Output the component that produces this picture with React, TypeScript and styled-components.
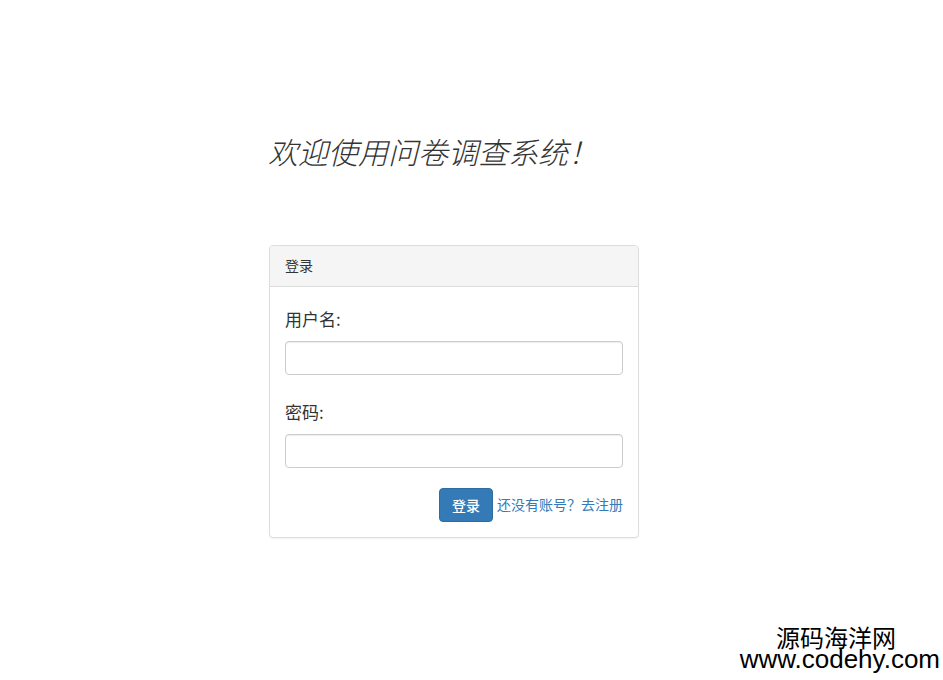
import styled, { createGlobalStyle } from "styled-components";

const GlobalStyle = createGlobalStyle`
  html, body {
    margin: 0;
    padding: 0;
    background: #fff;
  }
  body {
    font-family: "Liberation Sans", "Noto Sans CJK SC", sans-serif;
    font-size: 14px;
    line-height: 1.42857;
    color: #333;
  }
  * {
    box-sizing: border-box;
  }
`;

const Page = styled.div`
  width: 943px;
  height: 680px;
  position: relative;
  padding: 135px 0 0 268px;
`;

const Title = styled.h1`
  margin: 0 0 77px;
  font-size: 30px;
  line-height: 33px;
  font-weight: 300;
  font-style: italic;
  color: #333;
  font-family: "Noto Sans CJK SC", sans-serif;
`;

const Panel = styled.div`
  width: 370px;
  margin-left: 1px;
  border: 1px solid #ddd;
  border-radius: 4px;
  background: #fff;
  box-shadow: 0 1px 1px rgba(0, 0, 0, 0.05);
`;

const PanelHeading = styled.div`
  height: 41px;
  padding: 10px 15px;
  background: #f5f5f5;
  border-bottom: 1px solid #ddd;
  border-radius: 3px 3px 0 0;
  font-family: "Noto Sans CJK SC", sans-serif;
  font-size: 14px;
  line-height: 19px;
  color: #333;
`;

const PanelBody = styled.form`
  padding: 19px 15px 15px;
`;

const FormGroup = styled.div<{ $gap: number }>`
  margin-bottom: ${(p) => p.$gap}px;
`;

const Label = styled.label`
  display: block;
  margin-bottom: 9px;
  font-family: "Noto Sans CJK SC", sans-serif;
  font-size: 17px;
  line-height: 26px;
  font-weight: 400;
  color: #333;
`;

const Input = styled.input`
  display: block;
  width: 100%;
  height: 34px;
  padding: 6px 12px;
  border: 1px solid #ccc;
  border-radius: 4px;
  box-shadow: inset 0 1px 1px rgba(0, 0, 0, 0.075);
  font-size: 14px;
  outline: none;
`;

const Actions = styled.div`
  display: flex;
  justify-content: flex-end;
  align-items: center;
  gap: 4px;
`;

const Button = styled.button`
  width: 54px;
  height: 34px;
  padding: 0;
  border: 1px solid #2e6da4;
  border-radius: 4px;
  background: #337ab7;
  color: #fff;
  font-family: "Noto Sans CJK SC", sans-serif;
  font-size: 14px;
  font-weight: 500;
  cursor: pointer;
`;

const Link = styled.a`
  color: #337ab7;
  text-decoration: none;
  font-family: "Noto Sans CJK SC", sans-serif;
  font-size: 14px;
  margin-top: -2px;
`;

const Watermark = styled.div`
  position: absolute;
  right: 3px;
  bottom: 9px;
  text-align: right;
  color: #000;
  line-height: 23px;
`;

const WatermarkName = styled.div`
  font-family: "Noto Sans CJK SC", sans-serif;
  font-size: 24px;
  padding-right: 44px;
`;

const WatermarkUrl = styled.div`
  font-family: "Liberation Sans", sans-serif;
  font-size: 26px;
`;

export default function App() {
  return (
    <>
      <GlobalStyle />
      <Page>
        <Title>欢迎使用问卷调查系统！</Title>
        <Panel>
          <PanelHeading>登录</PanelHeading>
          <PanelBody onSubmit={(e) => e.preventDefault()}>
            <FormGroup $gap={24}>
              <Label htmlFor="username">用户名:</Label>
              <Input id="username" type="text" />
            </FormGroup>
            <FormGroup $gap={20}>
              <Label htmlFor="password">密码:</Label>
              <Input id="password" type="password" />
            </FormGroup>
            <Actions>
              <Button type="submit">登录</Button>
              <Link href="#">还没有账号？去注册</Link>
            </Actions>
          </PanelBody>
        </Panel>
        <Watermark>
          <WatermarkName>源码海洋网</WatermarkName>
          <WatermarkUrl>www.codehy.com</WatermarkUrl>
        </Watermark>
      </Page>
    </>
  );
}
